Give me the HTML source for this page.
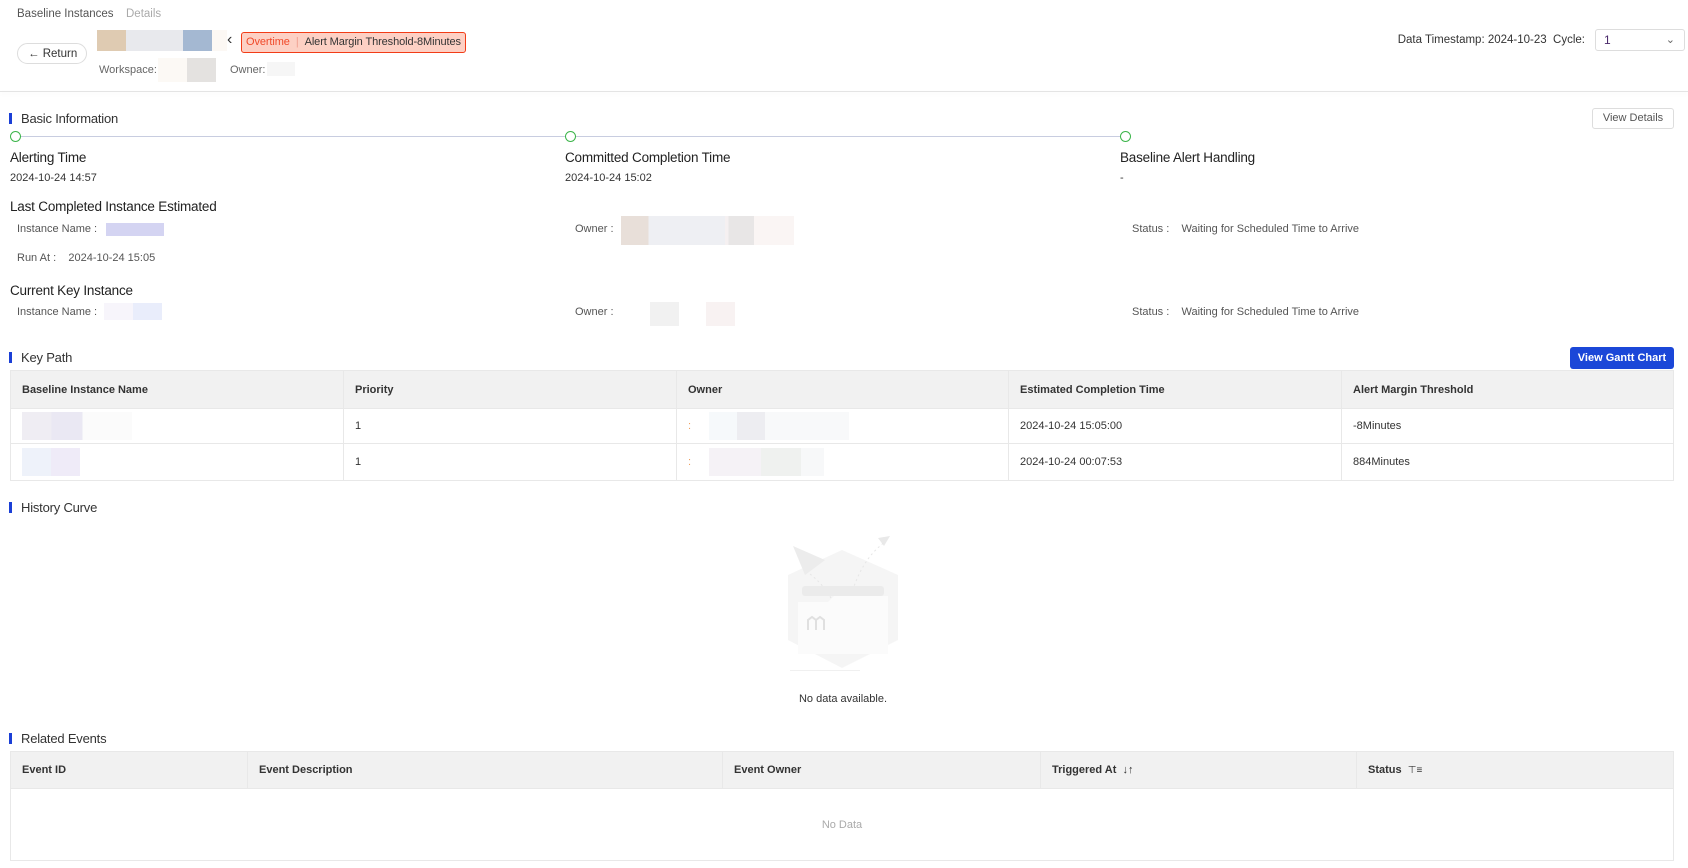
<!DOCTYPE html>
<html><head><meta charset="utf-8"><style>
*{box-sizing:border-box;margin:0;padding:0}
body{width:1688px;height:868px;background:#fff;font-family:"Liberation Sans",Arial,sans-serif;color:#333;font-size:12px;position:relative;overflow:hidden}
.a{position:absolute;white-space:nowrap}
.lab{color:#555;font-size:11px}
.bar{position:absolute;left:9px;width:3px;height:11px;background:#1b3fd6}
.sec{position:absolute;left:21px;font-size:13px;color:#333;letter-spacing:-0.2px}
.circ{position:absolute;width:11px;height:11px;border:1.5px solid #3cb54a;border-radius:50%;background:#fff;top:131px}
.big{font-size:13.5px;color:#222;letter-spacing:-0.2px}
table{border-collapse:collapse;position:absolute;left:10px;width:1664px;font-size:11px}
td,th{border:1px solid #e8e8e8;text-align:left;padding:0 11px;font-weight:normal}
th{background:#f1f1f1;font-weight:bold;color:#333}
</style></head><body>
<div class="a" style="left:17px;top:8px;font-size:11.5px;color:#555">Baseline Instances</div>
<div class="a" style="left:126px;top:8px;font-size:11.5px;color:#aaa">Details</div>
<div class="a" style="left:17px;top:43px;width:70px;height:21px;border:1px solid #ddd;border-radius:11px;font-size:11.5px;line-height:20px;padding-left:10px">← Return</div>
<div class="a" style="left:97px;top:30px;width:29px;height:21px;background:#dfcbb2"></div>
<div class="a" style="left:126px;top:30px;width:57px;height:21px;background:#e8e9ed"></div>
<div class="a" style="left:183px;top:30px;width:29px;height:21px;background:#a4b8d2"></div>
<div class="a" style="left:212px;top:30px;width:15px;height:21px;background:#fcf8f4"></div>
<div class="a" style="left:227px;top:31px;font-size:16px;color:#333">‹</div>
<div class="a" style="left:241px;top:32px;width:225px;height:21px;background:#fdd0c4;border:1px solid #f23c17;border-radius:3px;font-size:11px;line-height:19px;padding-left:4px;letter-spacing:-0.1px"><span style="color:#f04a2a">Overtime</span><span style="color:#f0a090;margin:0 6px">|</span>Alert Margin Threshold-8Minutes</div>
<div class="a" style="left:99px;top:64px;font-size:11px;color:#666">Workspace:</div>
<div class="a" style="left:158px;top:58px;width:29px;height:24px;background:#fcf9f5"></div>
<div class="a" style="left:187px;top:58px;width:29px;height:24px;background:#e4e2e0"></div>
<div class="a" style="left:230px;top:64px;font-size:11px;color:#666">Owner:</div>
<div class="a" style="left:267px;top:62px;width:28px;height:14px;background:#f6f6f6"></div>
<div class="a" style="right:103px;top:34px;font-size:11.5px;color:#333">Data Timestamp:&nbsp;2024-10-23&nbsp;&nbsp;Cycle:</div>
<div class="a" style="left:1595px;top:29px;width:90px;height:22px;border:1px solid #ddd;border-radius:3px;font-size:12px;line-height:20px;padding-left:8px;color:#4a2a6a">1<span style="position:absolute;right:9px;top:0;color:#666;font-size:11px">⌄</span></div>
<div class="a" style="left:0;top:91px;width:1688px;height:1px;background:#e4e4e4;box-shadow:0 2px 4px rgba(0,0,0,.06)"></div>

<div class="bar" style="top:113px"></div><div class="sec" style="top:111px">Basic Information</div>
<div class="a" style="left:1592px;top:108px;width:82px;height:21px;border:1px solid #ddd;border-radius:3px;font-size:11px;line-height:19px;text-align:center;color:#555">View Details</div>
<div class="a" style="left:16px;top:136px;width:1109px;height:1px;background:#c8cde0"></div>
<div class="circ" style="left:10px"></div><div class="circ" style="left:565px"></div><div class="circ" style="left:1120px"></div>
<div class="a big" style="left:10px;top:150px">Alerting Time</div>
<div class="a" style="left:10px;top:172px;font-size:11px">2024-10-24 14:57</div>
<div class="a big" style="left:565px;top:150px">Committed Completion Time</div>
<div class="a" style="left:565px;top:172px;font-size:11px">2024-10-24 15:02</div>
<div class="a big" style="left:1120px;top:150px">Baseline Alert Handling</div>
<div class="a" style="left:1120px;top:172px;font-size:11px">-</div>
<div class="a big" style="left:10px;top:199px">Last Completed Instance Estimated</div>
<div class="a lab" style="left:17px;top:223px">Instance Name :</div>
<div class="a" style="left:106px;top:223px;width:58px;height:13px;background:#d4d4f2"></div>
<div class="a lab" style="left:575px;top:223px">Owner :</div>
<div class="a" style="left:621px;top:216px;width:173px;height:29px;background:linear-gradient(90deg,#e8dfd9 0 16%,#eeeff3 16% 60%,#f5f0f1 60% 62%,#e8e6e6 62% 77%,#faf5f4 77%)"></div>
<div class="a lab" style="left:1132px;top:223px">Status :&nbsp;&nbsp;&nbsp;&nbsp;Waiting for Scheduled Time to Arrive</div>
<div class="a lab" style="left:17px;top:252px">Run At :&nbsp;&nbsp;&nbsp;&nbsp;2024-10-24 15:05</div>
<div class="a big" style="left:10px;top:283px">Current Key Instance</div>
<div class="a lab" style="left:17px;top:306px">Instance Name :</div>
<div class="a" style="left:104px;top:303px;width:58px;height:17px;background:linear-gradient(90deg,#f7f5fb 50%,#e9edfb 50%)"></div>
<div class="a lab" style="left:575px;top:306px">Owner :</div>
<div class="a" style="left:650px;top:302px;width:29px;height:24px;background:#f1f1f1"></div>
<div class="a" style="left:706px;top:302px;width:29px;height:24px;background:#f8f2f2"></div>
<div class="a lab" style="left:1132px;top:306px">Status :&nbsp;&nbsp;&nbsp;&nbsp;Waiting for Scheduled Time to Arrive</div>

<div class="bar" style="top:352px"></div><div class="sec" style="top:350px">Key Path</div>
<div class="a" style="left:1570px;top:347px;width:104px;height:22px;background:#1b47d8;border-radius:3px;color:#fff;font-size:11px;font-weight:bold;line-height:22px;text-align:center">View Gantt Chart</div>
<table style="top:370px">
<tr style="height:38px"><th style="width:333px">Baseline Instance Name</th><th style="width:333px">Priority</th><th style="width:332px">Owner</th><th style="width:333px">Estimated Completion Time</th><th>Alert Margin Threshold</th></tr>
<tr style="height:35px"><td><div style="width:110px;height:28px;background:linear-gradient(90deg,#efedf3 0 27%,#eae8f3 27% 55%,#fbfbfb 55%)"></div></td><td>1</td><td><span style="color:#f0a060">:</span><span style="display:inline-block;vertical-align:middle;margin-left:18px;width:140px;height:28px;background:linear-gradient(90deg,#f6f9fb 0 20%,#ededf1 20% 40%,#f8f9fa 40%)"></span></td><td>2024-10-24 15:05:00</td><td>-8Minutes</td></tr>
<tr style="height:37px"><td><div style="width:58px;height:28px;background:linear-gradient(90deg,#eef2fa 50%,#efebf8 50%)"></div></td><td>1</td><td><span style="color:#f0a060">:</span><span style="display:inline-block;vertical-align:middle;margin-left:18px;width:115px;height:28px;background:linear-gradient(90deg,#f5f2f6 0 45%,#eff1ef 45% 80%,#f7f8f9 80%)"></span></td><td>2024-10-24 00:07:53</td><td>884Minutes</td></tr>
</table>

<div class="bar" style="top:502px"></div><div class="sec" style="top:500px">History Curve</div>
<svg class="a" style="left:770px;top:530px" width="150" height="150" viewBox="0 0 150 150">
<polygon points="72,20 128,45 128,110 72,138 18,110 18,45" fill="#f5f5f5"/>
<polygon points="23,16 55,30 35,45" fill="#ececec"/>
<polygon points="120,6 108,8 114,16" fill="#e9e9e9"/>
<path d="M40,44 Q60,60 66,80 M80,70 Q90,30 115,12" stroke="#e6e6e6" stroke-dasharray="2 3" fill="none"/>
<rect x="32" y="56" width="82" height="10" rx="3" fill="#ebebeb"/>
<path d="M28,72 h30 l6,-6 h54 v58 h-90z" fill="#fbfbfb"/>
<path d="M38,100 v-10 l4,-3 l4,3 v10 M46,90 l4,-3 l4,3 v10" stroke="#e0e0e0" stroke-width="2" fill="none"/>
<rect x="20" y="140" width="70" height="1" fill="#f0f0f0"/>
</svg>
<div class="a" style="left:790px;top:693px;width:106px;text-align:center;font-size:11px">No data available.</div>

<div class="bar" style="top:733px"></div><div class="sec" style="top:731px">Related Events</div>
<table style="top:751px">
<tr style="height:37px"><th style="width:237px">Event ID</th><th style="width:475px">Event Description</th><th style="width:318px">Event Owner</th><th style="width:316px">Triggered At&nbsp;&nbsp;<span style="font-weight:normal">↓↑</span></th><th>Status&nbsp;&nbsp;<span style="font-weight:normal;font-size:10px">⊤≡</span></th></tr>
<tr style="height:72px"><td colspan="5" style="text-align:center;color:#aaa;font-size:11px">No Data</td></tr>
</table>
</body></html>
